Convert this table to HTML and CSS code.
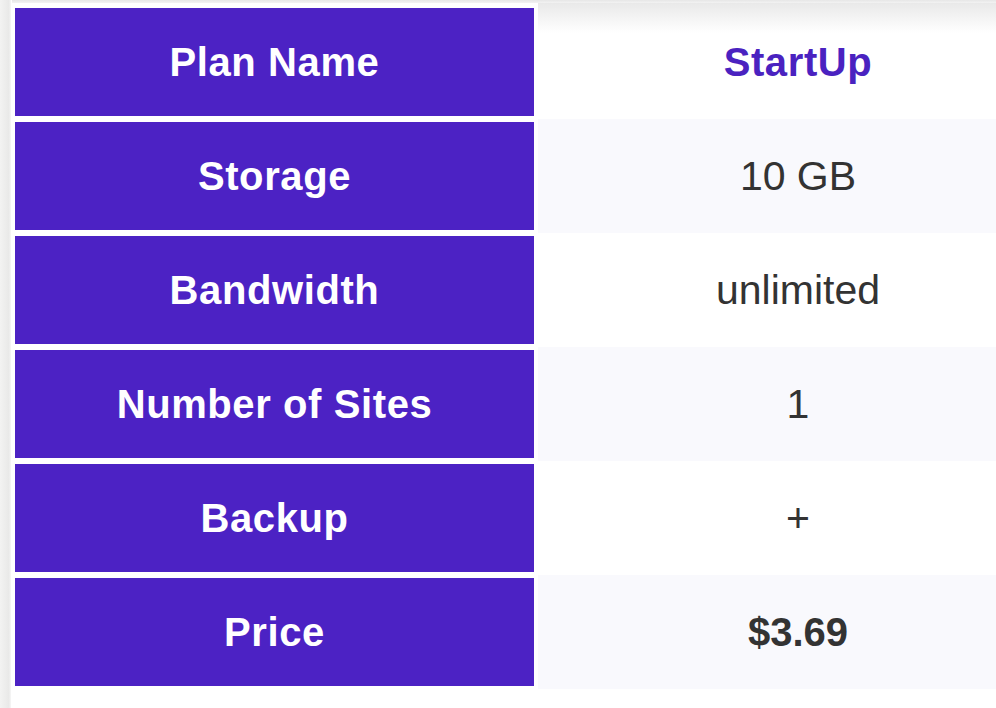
FILE: index.html
```html
<!DOCTYPE html>
<html lang="en">
<head>
<meta charset="utf-8">
<title>Plan comparison</title>
<link rel="stylesheet" href="styles.css">
</head>
<body>
<div class="page">
  <div class="edge"></div>
  <div class="main">
    <div class="topline"></div>
    <div class="wrap">
      <table class="plans">
        <tbody>
          <tr><th>Plan Name</th><td class="plan">StartUp</td></tr>
          <tr class="alt"><th>Storage</th><td>10 GB</td></tr>
          <tr><th>Bandwidth</th><td>unlimited</td></tr>
          <tr class="alt"><th>Number of Sites</th><td>1</td></tr>
          <tr><th>Backup</th><td>+</td></tr>
          <tr class="alt"><th>Price</th><td class="price">$3.69</td></tr>
        </tbody>
      </table>
      <div class="shade"></div>
    </div>
  </div>
</div>
</body>
</html>
```

FILE: styles.css
```css
html, body {
  margin: 0;
  padding: 0;
  background: #ffffff;
  width: 996px;
  height: 708px;
  overflow: hidden;
}
.page {
  display: flex;
  height: 708px;
  font-family: "Liberation Sans", Arial, sans-serif;
}
.edge {
  width: 11px;
  flex: none;
  background: linear-gradient(to right, #f3f3f2, #e9e9e8 80%, #f6f6f6);
}
.main {
  flex: 1;
  min-width: 0;
  padding-left: 1px;
  overflow: hidden;
}
.topline {
  height: 3px;
  background: linear-gradient(to bottom, #e6e6e6, #f3f3f3);
}
.wrap {
  position: relative;
  padding-top: 2px;
  overflow: hidden;
}
.plans {
  border-collapse: separate;
  border-spacing: 0;
  width: 1046px;
  table-layout: fixed;
}
.plans th {
  width: 519px;
  height: 108px;
  padding: 0;
  background: #4c22c4;
  border: 3px solid #ffffff;
  border-right-width: 4px;
  color: #ffffff;
  font-weight: 700;
  font-size: 40px;
  letter-spacing: 0.6px;
  text-align: center;
  vertical-align: middle;
}
.plans td {
  width: 520px;
  padding: 0;
  text-align: center;
  vertical-align: middle;
  font-size: 41px;
  color: #333333;
  background: #ffffff;
}
.plans tr.alt td {
  background: #f9f9fd;
}
.plans td.plan {
  color: #4a22c0;
  font-weight: 700;
  font-size: 40px;
  letter-spacing: 0.6px;
}
.plans td.price {
  font-weight: 700;
  font-size: 40px;
}
.shade {
  position: absolute;
  top: 0;
  left: 526px;
  right: 0;
  height: 30px;
  background: linear-gradient(to bottom, #e9e9e9, rgba(255,255,255,0));
  pointer-events: none;
}
```
